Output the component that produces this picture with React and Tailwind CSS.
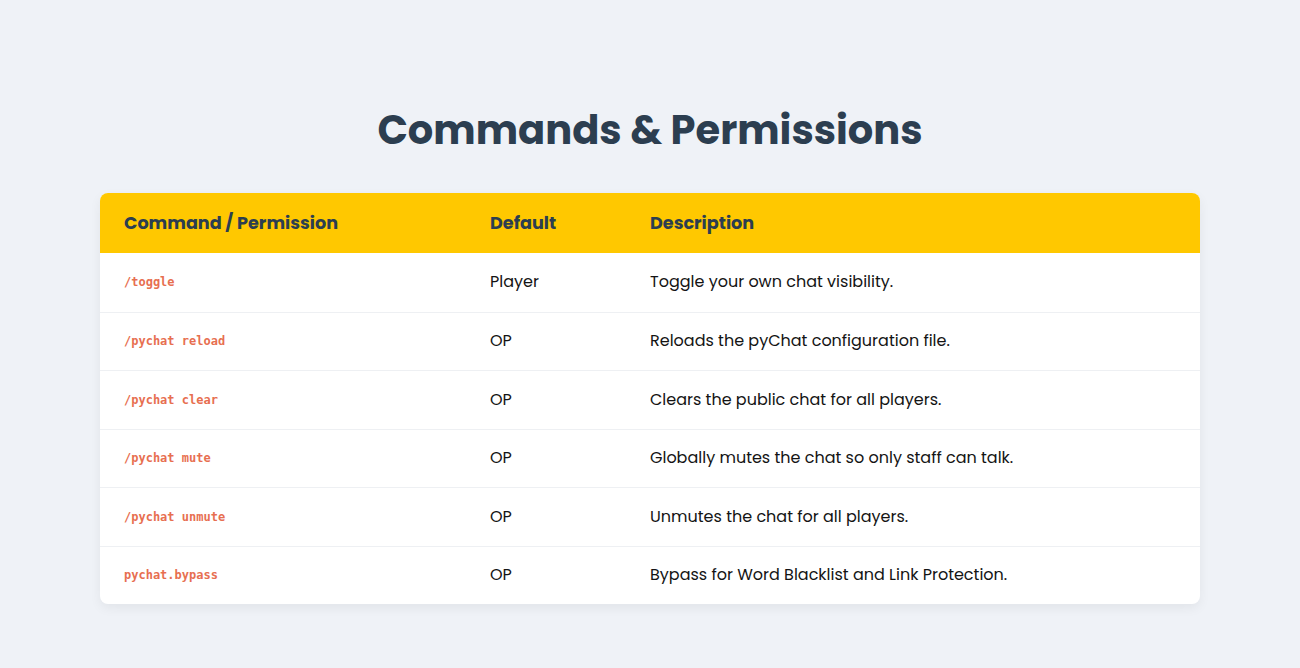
const rows = [
  { cmd: "/toggle", def: "Player", desc: "Toggle your own chat visibility." },
  { cmd: "/pychat reload", def: "OP", desc: "Reloads the pyChat configuration file." },
  { cmd: "/pychat clear", def: "OP", desc: "Clears the public chat for all players." },
  { cmd: "/pychat mute", def: "OP", desc: "Globally mutes the chat so only staff can talk." },
  { cmd: "/pychat unmute", def: "OP", desc: "Unmutes the chat for all players." },
  { cmd: "pychat.bypass", def: "OP", desc: "Bypass for Word Blacklist and Link Protection." },
];

export default function App() {
  return (
    <div className="min-h-[668px] bg-[#eff2f7] pt-[100px] pb-16 font-['Poppins','Open_Sans',sans-serif]">
      {/* Section title */}
      <h1 className="text-center text-[40px] leading-[60px] font-bold text-[#2c3e50] mb-[33px]">
        Commands &amp; Permissions
      </h1>

      {/* Commands table */}
      <div className="mx-[100px] bg-white rounded-lg overflow-hidden shadow-[0_4px_12px_rgba(0,0,0,0.06)]">
        <div className="grid grid-cols-[366px_160px_1fr] bg-[#ffc800] h-[60px] items-center text-[17.6px] font-bold text-[#2c3e50]">
          <div className="pl-6">Command / Permission</div>
          <div className="pl-6">Default</div>
          <div className="pl-6">Description</div>
        </div>
        {rows.map((r, i) => (
          <div
            key={r.cmd}
            className={`grid grid-cols-[366px_160px_1fr] items-center h-[58.5px] text-[16px] text-[#141414] ${i > 0 ? "border-t border-[#eef0f3]" : ""}`}
          >
            <div className="pl-6 font-['DejaVu_Sans_Mono',monospace] font-bold text-[12px] text-[#e76f51]">{r.cmd}</div>
            <div className="pl-6">{r.def}</div>
            <div className="pl-6">{r.desc}</div>
          </div>
        ))}
      </div>
    </div>
  );
}
